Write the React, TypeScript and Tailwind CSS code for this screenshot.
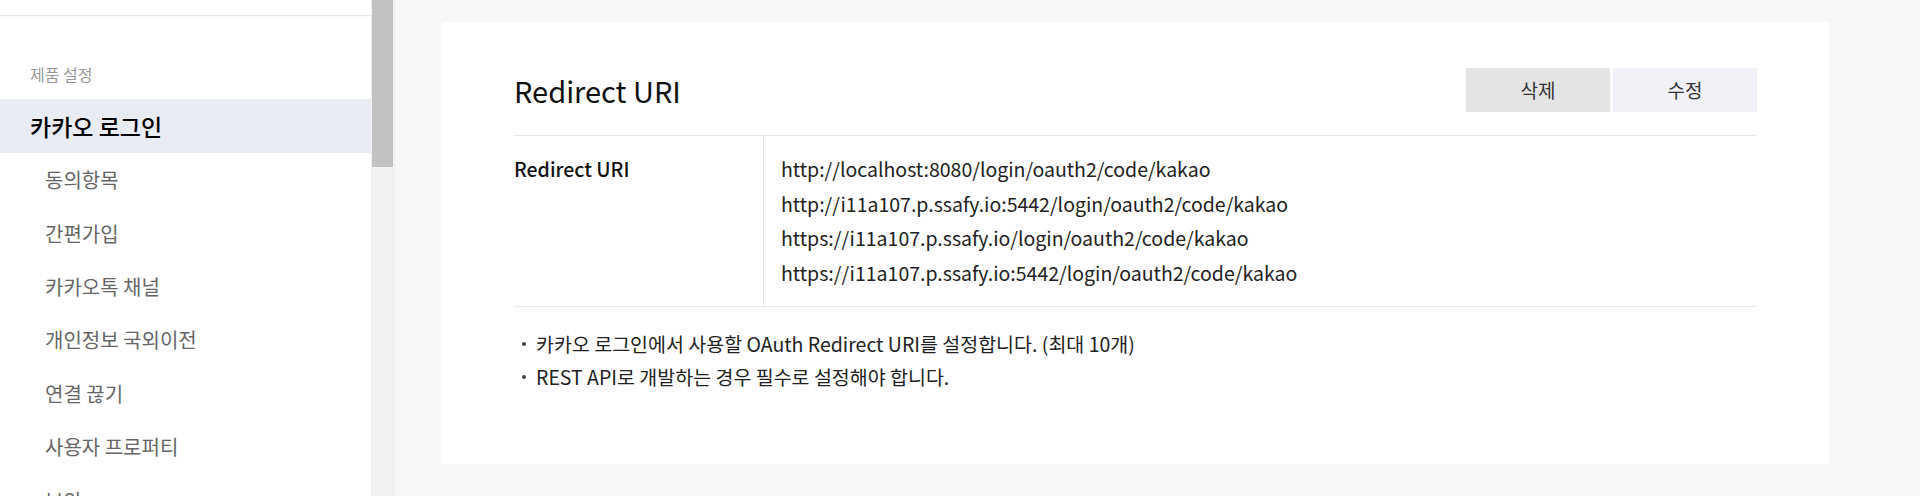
const subItems = ['동의항목', '간편가입', '카카오톡 채널', '개인정보 국외이전', '연결 끊기', '사용자 프로퍼티', '보안'];

const uris = [
  'http://localhost:8080/login/oauth2/code/kakao',
  'http://i11a107.p.ssafy.io:5442/login/oauth2/code/kakao',
  'https://i11a107.p.ssafy.io/login/oauth2/code/kakao',
  'https://i11a107.p.ssafy.io:5442/login/oauth2/code/kakao',
];

const notes = [
  '카카오 로그인에서 사용할 OAuth Redirect URI를 설정합니다. (최대 10개)',
  'REST API로 개발하는 경우 필수로 설정해야 합니다.',
];

function Sidebar() {
  return (
    <aside className="w-[371px] flex-none bg-white overflow-hidden flex flex-col">
      <div className="h-[16px] flex-none border-b border-[#e6e6e6] shadow-[0_1px_2px_rgba(0,0,0,0.03)]" />
      <div className="mt-[47px] mb-[14px] pl-[30px] text-[16px] leading-[22px] text-[#999]">제품 설정</div>
      <div className="h-[54px] flex-none flex items-center pl-[30px] bg-[#e9ecf3] text-[23px] font-medium text-black">
        카카오 로그인
      </div>
      {subItems.map((item) => (
        <div key={item} className="h-[53.4px] flex-none flex items-center pl-[45px] pt-[1px] text-[20px] text-[#666]">
          {item}
        </div>
      ))}
    </aside>
  );
}

function Scrollbar() {
  return (
    <div className="w-[24px] flex-none bg-[#f1f1f1] pl-[1px] pr-[2px]">
      <div className="h-[167px] bg-[#c1c1c1]" />
    </div>
  );
}

function RedirectCard() {
  return (
    <section className="w-[1387px] ml-[47px] mt-[22px] h-[442px] bg-white px-[72px] pt-[46px]">
      <div className="flex items-center justify-between h-[44px]">
        <h2 className="text-[29px] leading-[40px] text-[#111] -mt-[1px]">Redirect URI</h2>
        <div className="flex gap-[3px]">
          <button className="w-[144px] h-[44px] bg-[#e4e4e4] text-[19px] text-[#333]">삭제</button>
          <button className="w-[144px] h-[44px] bg-[#f1f2f8] text-[19px] text-[#333]">수정</button>
        </div>
      </div>
      <div className="mt-[23px] flex border-t border-b border-[#e8e8e8]">
        <div className="w-[249px] flex-none py-[16px] text-[19.5px] leading-[34.5px] font-medium text-[#111]">
          Redirect URI
        </div>
        <div className="flex-1 border-l border-[#e8e8e8] pl-[17px] py-[16px] text-[19.5px] leading-[34.5px] text-[#222]">
          {uris.map((u) => (
            <div key={u}>{u}</div>
          ))}
        </div>
      </div>
      <ul className="mt-[20px] text-[19.5px] leading-[33px] text-[#222]">
        {notes.map((n) => (
          <li key={n} className="flex items-center">
            <span className="w-[22px] flex-none flex items-center pl-[8px]">
              <span className="w-[4px] h-[4px] rounded-full bg-[#444]" />
            </span>
            <span>{n}</span>
          </li>
        ))}
      </ul>
    </section>
  );
}

export default function App() {
  return (
    <div className="flex w-[1920px] h-[496px] overflow-hidden bg-[#f6f7f7] font-['Noto_Sans_CJK_KR','Noto_Sans',sans-serif]">
      <Sidebar />
      <Scrollbar />
      <main className="flex-1">
        <RedirectCard />
      </main>
    </div>
  );
}
